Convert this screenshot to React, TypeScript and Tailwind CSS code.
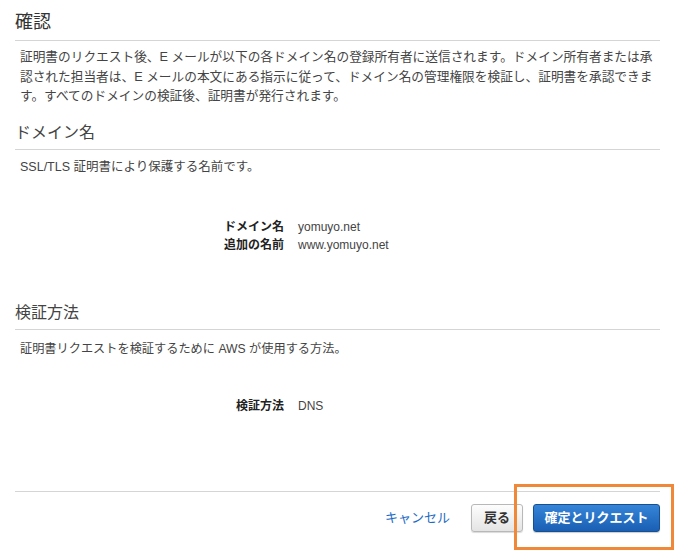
import React from 'react';

const font = { fontFamily: '"Liberation Sans", "Noto Sans CJK JP", sans-serif' };

const SectionTitle = ({ children, className = '' }: { children: React.ReactNode; className?: string }) => (
  <div className={`border-b border-[#d5d5d5] pb-[5px] ${className}`}>
    <h2 className="text-[16px] leading-[22px] text-[#444]">{children}</h2>
  </div>
);

const Row = ({ label, value }: { label: string; value: string }) => (
  <div className="grid grid-cols-[269px_1fr] gap-x-[14px] text-[12px] leading-[18px]">
    <span className="text-right font-bold text-[#222]">{label}</span>
    <span className="text-[#444]">{value}</span>
  </div>
);

export default function App() {
  return (
    <div className="relative h-[553px] w-[680px] overflow-hidden bg-white" style={font}>
      <div className="ml-[15px] w-[645px]">
        <div className="border-b border-[#d5d5d5] pb-[5px] pt-[10px]">
          <h1 className="text-[18px] leading-[25px] text-[#333]">確認</h1>
        </div>
        <p className="mt-[7px] pl-[5px] text-[12.7px] leading-[19.5px] text-[#444]">
          証明書のリクエスト後、E メールが以下の各ドメイン名の登録所有者に送信されます。ドメイン所有者または承認された担当者は、E メールの本文にある指示に従って、ドメイン名の管理権限を検証し、証明書を承認できます。すべてのドメインの検証後、証明書が発行されます。
        </p>

        <SectionTitle className="mt-[15px]">ドメイン名</SectionTitle>
        <p className="mt-[7px] pl-[5px] text-[12.5px] leading-[20px] text-[#444]">SSL/TLS 証明書により保護する名前です。</p>
        <div className="mt-[41px] flex flex-col">
          <Row label="ドメイン名" value="yomuyo.net" />
          <Row label="追加の名前" value="www.yomuyo.net" />
        </div>

        <SectionTitle className="mt-[48px]">検証方法</SectionTitle>
        <p className="mt-[9px] pl-[5px] text-[12.2px] leading-[20px] text-[#444]">
          証明書リクエストを検証するために AWS が使用する方法。
        </p>
        <div className="mt-[38px]">
          <Row label="検証方法" value="DNS" />
        </div>

        <div className="mt-[76px] border-t border-[#d5d5d5]" />
        <div className="mt-[12px] flex items-center justify-end">
          <a className="mr-[21px] text-[13px] text-[#1e6bc6]">キャンセル</a>
          <button className="mr-[10px] h-[28px] w-[52px] rounded-[3px] border border-[#b8b8b8] bg-gradient-to-b from-[#fdfdfd] to-[#e4e4e4] text-[13px] font-bold text-[#333] shadow-[0_1px_1px_rgba(0,0,0,0.15)]">
            戻る
          </button>
          <button className="h-[28px] w-[127px] rounded-[3px] border border-[#16508f] bg-gradient-to-b from-[#3585d8] to-[#1a5fb4] text-[13px] font-bold text-white shadow-[0_1px_1px_rgba(0,0,0,0.2)]">
            確定とリクエスト
          </button>
        </div>
      </div>
      <div className="absolute left-[514px] top-[484px] h-[66px] w-[160px] border-[3px] border-[#f0883a]" />
    </div>
  );
}
